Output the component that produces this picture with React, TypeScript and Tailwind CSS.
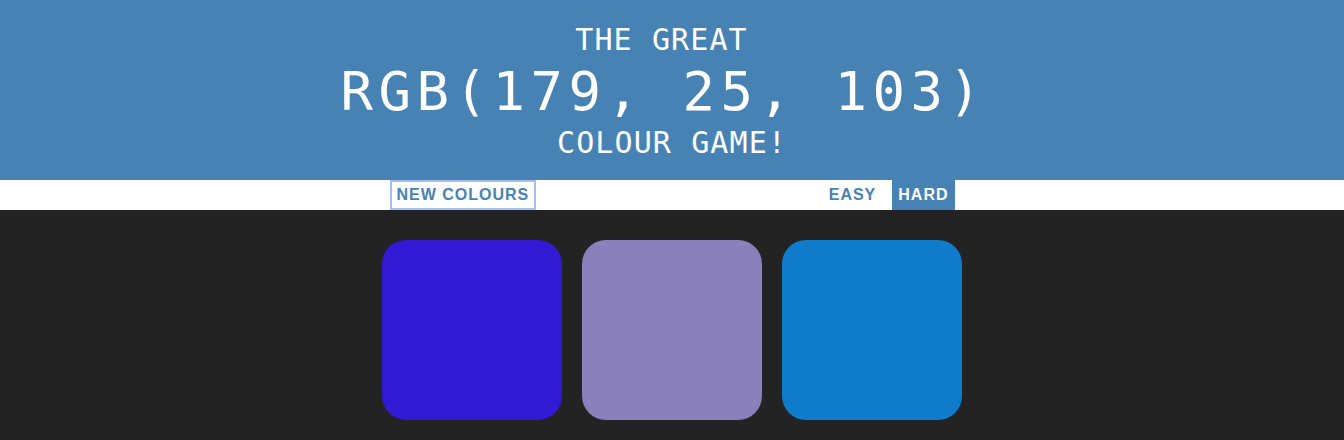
import React from 'react';

const squares = ['#3219d4', '#8980bc', '#0e7ccb'];

const App: React.FC = () => {
  const [mode, setMode] = React.useState<'easy' | 'hard'>('hard');

  return (
    <div className="min-h-screen bg-[#232323]">
      {/* Header */}
      <h1 className="h-[180px] bg-[#4682b4] pt-[25px] text-center font-normal uppercase text-white font-['DejaVu_Sans_Mono',monospace]">
        <span className="block pr-[21px] text-[30px] leading-[30px] tracking-[1.1px]">The Great</span>
        <span className="block pr-[17px] text-[54px] leading-[73px] tracking-[5.5px]">RGB(179, 25, 103)</span>
        <span className="block text-[30px] leading-[30px] tracking-[1.1px]">Colour Game!</span>
      </h1>

      {/* Stripe */}
      <div className="h-[30px] bg-white">
        <div className="mx-auto flex h-full w-[565px] items-stretch justify-between font-['Liberation_Sans',Arial,sans-serif] text-[16px] font-bold uppercase tracking-[1px] text-[#4682b4]">
          <button className="border-2 border-[#a3bff0] px-[5px] uppercase">New Colours</button>
          <div className="flex items-stretch gap-[10px]">
            <button
              onClick={() => setMode('easy')}
              className={mode === 'easy' ? 'bg-[#4682b4] px-[6px] uppercase text-white' : 'px-[6px] uppercase'}
            >
              Easy
            </button>
            <button
              onClick={() => setMode('hard')}
              className={mode === 'hard' ? 'bg-[#4682b4] px-[6px] uppercase text-white' : 'px-[6px] uppercase'}
            >
              Hard
            </button>
          </div>
        </div>
      </div>

      {/* Squares */}
      <div className="mx-auto mt-[30px] flex w-[580px] gap-[20px]">
        {squares.map((c) => (
          <div key={c} className="h-[180px] w-[180px] rounded-[24px]" style={{ backgroundColor: c }} />
        ))}
      </div>
    </div>
  );
};

export default App;
